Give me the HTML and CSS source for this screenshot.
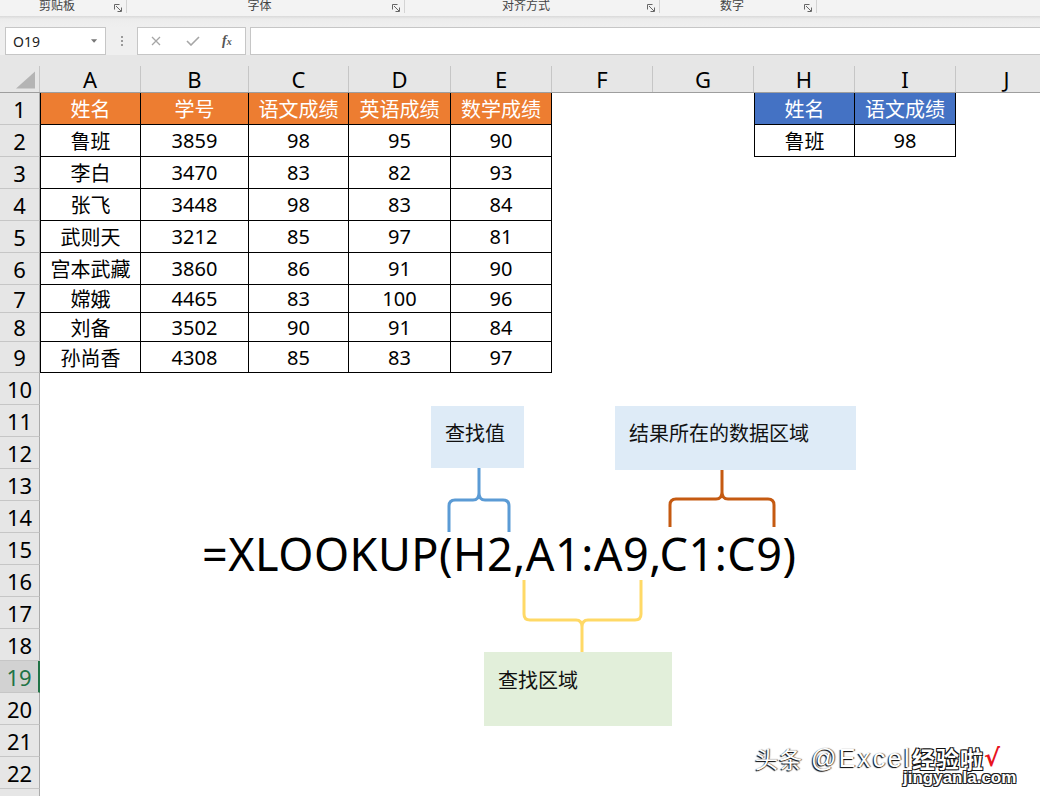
FILE: index.html
```html
<!DOCTYPE html>
<html lang="zh-CN">
<head>
<meta charset="utf-8">
<title>XLOOKUP</title>
<link rel="stylesheet" href="styles.css">
</head>
<body>
<div class="ribbon">
  <div class="grp g1"><span class="glabel">剪贴板</span><svg class="launcher" viewBox="0 0 8 8"><path d="M0.5 5.5V0.5H5.5M2 2L7 7M7.5 3.5V7.5H3.5"/></svg></div>
  <div class="grp g2"><span class="glabel">字体</span><svg class="launcher" viewBox="0 0 8 8"><path d="M0.5 5.5V0.5H5.5M2 2L7 7M7.5 3.5V7.5H3.5"/></svg></div>
  <div class="grp g3"><span class="glabel">对齐方式</span><svg class="launcher" viewBox="0 0 8 8"><path d="M0.5 5.5V0.5H5.5M2 2L7 7M7.5 3.5V7.5H3.5"/></svg></div>
  <div class="grp g4"><span class="glabel">数字</span><svg class="launcher" viewBox="0 0 8 8"><path d="M0.5 5.5V0.5H5.5M2 2L7 7M7.5 3.5V7.5H3.5"/></svg></div>
</div>
<div class="ribbon-shadow"></div>
<div class="fbar">
  <div class="namebox"><span class="ref">O19</span><svg class="dd" viewBox="0 0 8 4"><path d="M0 0H7L3.5 4Z"/></svg></div>
  <div class="grip"><i></i><i></i><i></i></div>
  <div class="fxbox">
    <svg class="xicon" viewBox="0 0 10 10"><path d="M1 1L9 9M9 1L1 9"/></svg>
    <svg class="okicon" viewBox="0 0 14 10"><path d="M1 5L5 9L13 1"/></svg>
    <span class="fx">f<span class="fxs">x</span></span>
  </div>
  <div class="finput"></div>
</div>
<div class="gap"></div>
<div class="colhead">
  <div class="corner"><svg class="tri" viewBox="0 0 20 18"><path d="M20 0V18H0Z"/></svg></div>
  <div class="ch">A</div><div class="ch">B</div><div class="ch">C</div><div class="ch">D</div><div class="ch">E</div>
  <div class="ch">F</div><div class="ch">G</div><div class="ch">H</div><div class="ch">I</div><div class="ch last">J</div>
</div>
<div class="sheet">
  <div class="rh">1</div><div class="rh">2</div><div class="rh">3</div><div class="rh">4</div><div class="rh">5</div>
  <div class="rh">6</div><div class="rh">7</div><div class="rh">8</div><div class="rh">9</div><div class="rh">10</div>
  <div class="rh">11</div><div class="rh">12</div><div class="rh">13</div><div class="rh">14</div><div class="rh">15</div>
  <div class="rh">16</div><div class="rh">17</div><div class="rh">18</div><div class="rh sel">19</div><div class="rh">20</div>
  <div class="rh">21</div><div class="rh">22</div><div class="rh">23</div>

  <div class="t1">
    <div class="c h">姓名</div><div class="c h">学号</div><div class="c h">语文成绩</div><div class="c h">英语成绩</div><div class="c h">数学成绩</div>
    <div class="c">鲁班</div><div class="c">3859</div><div class="c">98</div><div class="c">95</div><div class="c">90</div>
    <div class="c">李白</div><div class="c">3470</div><div class="c">83</div><div class="c">82</div><div class="c">93</div>
    <div class="c">张飞</div><div class="c">3448</div><div class="c">98</div><div class="c">83</div><div class="c">84</div>
    <div class="c">武则天</div><div class="c">3212</div><div class="c">85</div><div class="c">97</div><div class="c">81</div>
    <div class="c">宫本武藏</div><div class="c">3860</div><div class="c">86</div><div class="c">91</div><div class="c">90</div>
    <div class="c">嫦娥</div><div class="c">4465</div><div class="c">83</div><div class="c">100</div><div class="c">96</div>
    <div class="c">刘备</div><div class="c">3502</div><div class="c">90</div><div class="c">91</div><div class="c">84</div>
    <div class="c">孙尚香</div><div class="c">4308</div><div class="c">85</div><div class="c">83</div><div class="c">97</div>
  </div>

  <div class="t2">
    <div class="c hb">姓名</div><div class="c hb">语文成绩</div>
    <div class="c">鲁班</div><div class="c">98</div>
  </div>
</div>

<div class="callout cb1">查找值</div>
<div class="callout cb2">结果所在的数据区域</div>
<div class="callout cb3">查找区域</div>

<svg class="braces" viewBox="0 0 1040 796">
  <path class="b-blue" d="M449 532V506Q449 500 455 500H473Q479 500 479 493V468M509 532V506Q509 500 503 500H485Q479 500 479 493"/>
  <path class="b-orange" d="M670 527V505Q670 499 676 499H716Q722 499 722 492V470M774 527V505Q774 499 768 499H728Q722 499 722 492"/>
  <path class="b-yellow" d="M524 580V614Q524 620 530 620H576Q582 620 582 627V652M641 580V614Q641 620 635 620H588Q582 620 582 627"/>
</svg>

<div class="formula">=XLOOKUP(H2,A1:A9,C1:C9)</div>

<div class="wm">
  <div class="wm1"><span class="wmt">头条</span><span class="wml">@Excel</span><span class="wmb">经验啦</span><span class="wmc">√</span></div>
  <div class="wm2">jingyanla.com</div>
</div>
</body>
</html>
```

FILE: styles.css
```css
* { box-sizing: border-box; }
html, body { margin: 0; padding: 0; }
body {
  width: 1040px;
  height: 796px;
  overflow: hidden;
  position: relative;
  background: #ffffff;
  font-family: "Noto Sans", "Noto Sans CJK SC", sans-serif;
  color: #000;
}

/* ribbon */
.ribbon {
  height: 16px;
  background: #f3f3f3;
  display: flex;
  align-items: flex-start;
}
.grp {
  height: 13px;
  display: flex;
  align-items: flex-start;
  border-right: 1px solid #d4d4d4;
  padding-right: 4px;
}
.g1 { width: 127px; }
.g2 { width: 278px; }
.g3 { width: 255px; }
.g4 { width: 157px; }
.glabel {
  flex: 1;
  text-align: center;
  font-family: "Noto Sans CJK SC", sans-serif;
  font-size: 12px;
  line-height: 10px;
  color: #444;
}
.launcher {
  width: 8px;
  height: 8px;
  margin-top: 4px;
  fill: none;
  stroke: #666;
  stroke-width: 1;
}
.ribbon-shadow {
  height: 11px;
  background: linear-gradient(#d9d9d9, #ececec 3px, #efefef);
}

/* formula bar */
.fbar {
  height: 28px;
  display: flex;
  background: #efefef;
  padding-left: 5px;
}
.namebox {
  width: 101px;
  background: #fff;
  border: 1px solid #c6c6c6;
  display: flex;
  align-items: center;
  justify-content: space-between;
  padding: 0 7px;
}
.ref {
  font-size: 14px;
  color: #222;
}
.dd { width: 7px; height: 4px; fill: #777; }
.grip {
  width: 31px;
  display: flex;
  flex-direction: column;
  align-items: center;
  justify-content: center;
  gap: 2px;
}
.grip i {
  width: 2px;
  height: 2px;
  background: #9a9a9a;
}
.fxbox {
  width: 109px;
  background: #fff;
  border: 1px solid #c6c6c6;
  display: flex;
  align-items: center;
  padding-left: 13px;
}
.xicon { width: 10px; height: 10px; fill: none; stroke: #a6a6a6; stroke-width: 1.3; }
.okicon { width: 14px; height: 10px; fill: none; stroke: #a6a6a6; stroke-width: 1.6; margin-left: 25px; }
.fx {
  margin-left: 22px;
  font-family: "Liberation Serif", serif;
  font-style: italic;
  font-weight: bold;
  font-size: 14px;
  color: #555;
}
.fxs { font-size: 10px; }
.finput {
  flex: 1;
  margin-left: 4px;
  background: #fff;
  border-top: 1px solid #c6c6c6;
  border-bottom: 1px solid #c6c6c6;
  border-left: 1px solid #c6c6c6;
}
.gap { height: 11px; background: #e6e6e6; }

/* column headers */
.colhead {
  height: 27px;
  display: grid;
  grid-template-columns: 40px 101px 108px 100px 102px 101px 101px 101px 101px 101px 101px;
  background: #e6e6e6;
  border-bottom: 1px solid #9e9e9e;
}
.corner {
  border-right: 1px solid #c6c6c6;
  display: flex;
  align-items: flex-end;
  justify-content: flex-end;
  padding: 0 4px 3px 0;
}
.tri { width: 19px; height: 18px; fill: #b4b4b4; }
.ch {
  border-right: 1px solid #c6c6c6;
  display: flex;
  align-items: center;
  justify-content: center;
  font-size: 22px;
  line-height: 26px;
}
.ch.last { border-right: none; }

/* sheet */
.sheet {
  display: grid;
  grid-template-columns: 40px 101px 108px 100px 102px 101px 101px 101px 101px 101px 101px;
  grid-template-rows: repeat(6, 32px) 28px 29px 31px repeat(14, 32px);
}
.rh {
  grid-column: 1;
  background: #e6e6e6;
  border-right: 1px solid #ababab;
  border-bottom: 1px solid #c6c6c6;
  display: flex;
  align-items: center;
  justify-content: center;
  font-size: 22px;
}
.rh.sel {
  background: #d2d2d2;
  color: #217346;
  border-right: 2px solid #217346;
}
.t1 {
  grid-column: 2 / 7;
  grid-row: 1 / 10;
  display: grid;
  grid-template-columns: 101px 108px 100px 102px 101px;
  grid-template-rows: repeat(6, 32px) 28px 29px 31px;
}
.t2 {
  grid-column: 9 / 11;
  grid-row: 1 / 3;
  display: grid;
  grid-template-columns: 101px 101px;
  grid-template-rows: 32px 32px;
}
.c {
  display: flex;
  align-items: center;
  justify-content: center;
  border-right: 1px solid #000;
  border-bottom: 1px solid #000;
  font-size: 20px;
  color: #000;
}
.t1 > .c:nth-child(5n+1),
.t2 > .c:nth-child(2n+1) { border-left: 1px solid #000; }
.c.h { background: #ed7d31; color: #fff; }
.c.hb { background: #4472c4; color: #fff; }

/* callout boxes */
.callout {
  position: absolute;
  font-family: "Noto Sans CJK SC", sans-serif;
  font-size: 20px;
  line-height: 26px;
  color: #111;
  padding: 14px;
}
.cb1 { left: 431px; top: 406px; width: 93px; height: 62px; background: #deebf7; }
.cb2 { left: 615px; top: 406px; width: 241px; height: 64px; background: #deebf7; }
.cb3 { left: 484px; top: 652px; width: 188px; height: 74px; background: #e2efda; padding-top: 15px; }

.braces {
  position: absolute;
  left: 0;
  top: 0;
  width: 1040px;
  height: 796px;
  fill: none;
  stroke-width: 3;
}
.b-blue { stroke: #5b9bd5; }
.b-orange { stroke: #c55a11; }
.b-yellow { stroke: #ffd966; }

.formula {
  position: absolute;
  left: 202px;
  top: 524px;
  font-size: 45px;
  letter-spacing: 0.5px;
  line-height: 60px;
  white-space: nowrap;
  color: #000;
}

/* watermark */
.wm {
  position: absolute;
  left: 755px;
  top: 744px;
}
.wm1 {
  display: flex;
  align-items: center;
  height: 28px;
  white-space: nowrap;
}
.wmt {
  font-family: "Noto Sans CJK SC", sans-serif;
  font-size: 23px;
  letter-spacing: 1px;
  color: #fff;
  text-shadow: -1px 1px 1px #000, 1px 0 1px #555;
}
.wml {
  margin-left: 8px;
  font-family: "Liberation Sans", sans-serif;
  font-size: 25px;
  letter-spacing: 2.4px;
  color: #fff;
  text-shadow: -1px 1px 1px #000, 1px 0 1px #555;
}
.wmb {
  font-family: "Noto Sans CJK SC", sans-serif;
  font-size: 23px;
  letter-spacing: 1px;
  font-weight: bold;
  color: #fff;
  text-shadow: -1px 1px 0 #111, 1px -1px 0 #111, 1px 1px 0 #111, -1px -1px 0 #111;
}
.wmc {
  font-family: "DejaVu Sans", sans-serif;
  font-size: 24px;
  color: #e8141e;
  font-weight: bold;
}
.wm2 {
  margin-left: 148px;
  margin-top: -3px;
  font-family: "Liberation Sans", sans-serif;
  font-weight: bold;
  font-size: 17px;
  line-height: 18px;
  color: #fff;
  text-shadow: -1px 1px 0 #222, 1px -1px 0 #222, 1px 1px 0 #222, -1px -1px 0 #222;
}
```
